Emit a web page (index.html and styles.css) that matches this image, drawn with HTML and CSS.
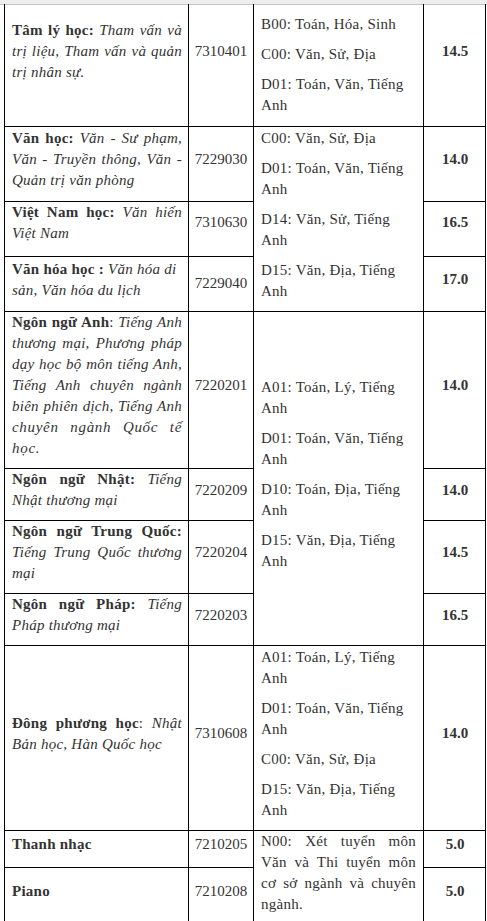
FILE: index.html
```html
<!DOCTYPE html>
<html lang="vi">
<head>
<meta charset="utf-8">
<title>Ngành đào tạo</title>
<link rel="stylesheet" href="styles.css">
</head>
<body>
<div class="topbar"></div>
<table class="majors">
  <colgroup>
    <col class="c-name">
    <col class="c-code">
    <col class="c-combo">
    <col class="c-score">
  </colgroup>
  <tbody>
    <tr class="r1">
      <td class="name shift-big"><b>Tâm lý học:</b> <i>Tham vấn và trị liệu, Tham vấn và quản trị nhân sự.</i></td>
      <td class="code shift-big">7310401</td>
      <td class="combo first">
        <p>B00: Toán, Hóa, Sinh</p>
        <p>C00: Văn, Sử, Địa</p>
        <p>D01: Toán, Văn, Tiếng Anh</p>
      </td>
      <td class="score shift-big">14.5</td>
    </tr>
    <tr class="r2">
      <td class="name"><b>Văn học:</b> <i>Văn - Sư phạm, Văn - Truyền thông, Văn - Quản trị văn phòng</i></td>
      <td class="code">7229030</td>
      <td class="combo" rowspan="3">
        <p>C00: Văn, Sử, Địa</p>
        <p>D01: Toán, Văn, Tiếng Anh</p>
        <p>D14: Văn, Sử, Tiếng Anh</p>
        <p>D15: Văn, Địa, Tiếng Anh</p>
      </td>
      <td class="score">14.0</td>
    </tr>
    <tr class="r3">
      <td class="name shift-mid"><b>Việt Nam học:</b> <i>Văn hiến Việt Nam</i></td>
      <td class="code shift-mid">7310630</td>
      <td class="score shift-mid">16.5</td>
    </tr>
    <tr class="r4">
      <td class="name left"><b>Văn hóa học :</b> <i>Văn hóa di sản, Văn hóa du lịch</i></td>
      <td class="code flat">7229040</td>
      <td class="score">17.0</td>
    </tr>
    <tr class="r5">
      <td class="name"><b>Ngôn ngữ Anh</b>: <i>Tiếng Anh thương mại, Phương pháp dạy học bộ môn tiếng Anh, Tiếng Anh chuyên ngành biên phiên dịch, Tiếng Anh <span class="tail">chuyên ngành Quốc tế học.</span></i></td>
      <td class="code">7220201</td>
      <td class="combo" rowspan="4">
        <p>A01: Toán, Lý, Tiếng Anh</p>
        <p>D01: Toán, Văn, Tiếng Anh</p>
        <p>D10: Toán, Địa, Tiếng Anh</p>
        <p>D15: Văn, Địa, Tiếng Anh</p>
      </td>
      <td class="score">14.0</td>
    </tr>
    <tr class="r6">
      <td class="name"><b>Ngôn ngữ Nhật:</b> <i>Tiếng Nhật thương mại</i></td>
      <td class="code">7220209</td>
      <td class="score">14.0</td>
    </tr>
    <tr class="r7">
      <td class="name"><b>Ngôn ngữ Trung Quốc:</b> <i>Tiếng Trung Quốc thương mại</i></td>
      <td class="code">7220204</td>
      <td class="score">14.5</td>
    </tr>
    <tr class="r8">
      <td class="name"><b>Ngôn ngữ Pháp:</b> <i>Tiếng Pháp thương mại</i></td>
      <td class="code">7220203</td>
      <td class="score">16.5</td>
    </tr>
    <tr class="r9">
      <td class="name"><b>Đông phương học</b>: <i>Nhật Bản học, Hàn Quốc học</i></td>
      <td class="code">7310608</td>
      <td class="combo">
        <p>A01: Toán, Lý, Tiếng Anh</p>
        <p>D01: Toán, Văn, Tiếng Anh</p>
        <p>C00: Văn, Sử, Địa</p>
        <p>D15: Văn, Địa, Tiếng Anh</p>
      </td>
      <td class="score">14.0</td>
    </tr>
    <tr class="r10">
      <td class="name"><b>Thanh nhạc</b></td>
      <td class="code">7210205</td>
      <td class="combo justify" rowspan="2">
        <p>N00: Xét tuyển môn Văn và Thi tuyển môn cơ sở ngành và chuyên ngành.</p>
      </td>
      <td class="score">5.0</td>
    </tr>
    <tr class="r11">
      <td class="name"><b>Piano</b></td>
      <td class="code">7210208</td>
      <td class="score">5.0</td>
    </tr>
  </tbody>
</table>
</body>
</html>
```

FILE: styles.css
```css
html, body {
  margin: 0;
  padding: 0;
  background: #ffffff;
}

body {
  font-family: "Liberation Serif", "Times New Roman", serif;
  font-size: 15px;
  line-height: 21px;
  color: #333333;
  width: 487px;
  height: 921px;
  overflow: hidden;
}

.topbar {
  height: 4px;
  background: #ededed;
  border-bottom: 1px solid #c4c4c4;
  margin-bottom: -1px;
}

.majors {
  margin-left: 4px;
  width: 481px;
  table-layout: fixed;
  border-collapse: collapse;
}

.c-name { width: 184px; }
.c-code { width: 65px; }
.c-combo { width: 170px; }
.c-score { width: 62px; }

.majors td {
  border: 1px solid #000000;
  padding: 0 6px 8px 7px;
  vertical-align: middle;
}

.majors tr.r1 td { border-top: none; }

.r1 { height: 122px; }
.r2 { height: 75px; }
.r3 { height: 54px; }
.r4 { height: 55px; }
.r5 { height: 157px; }
.r6 { height: 52px; }
.r7 { height: 73px; }
.r8 { height: 52px; }
.r9 { height: 185px; }
.r10 { height: 37px; }
.r11 { height: 56px; }

.name {
  text-align: justify;
  letter-spacing: 0.25px;
}

.name .tail {
  letter-spacing: 0.7px;
}

.name.left {
  text-align: left;
}

.name b {
  font-weight: bold;
}

.name i {
  font-style: italic;
}

.code {
  text-align: center;
}

.majors td.code {
  padding-left: 2px;
  padding-right: 2px;
}

.score {
  text-align: center;
  font-weight: bold;
}

.majors td.combo {
  padding-left: 7px;
  padding-right: 7px;
  letter-spacing: 0.25px;
}

.combo p {
  margin: 0;
}

.combo p + p {
  margin-top: 9px;
}

.majors td.combo.first {
  padding-top: 0;
  padding-bottom: 0;
}

.combo.justify {
  text-align: justify;
}

.majors td.shift-big {
  padding-bottom: 26px;
}

.majors td.shift-mid {
  padding-bottom: 12px;
}

.majors td.flat {
  padding-bottom: 0;
}
```
